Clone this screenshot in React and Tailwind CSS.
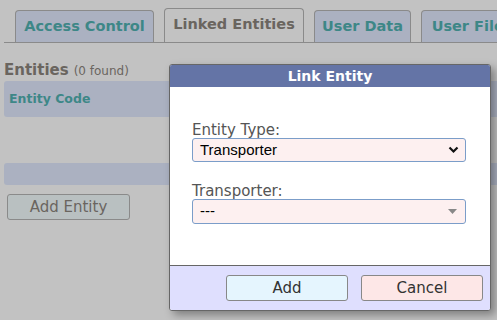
import React from "react";

function Tab({ label, active, w }) {
  return (
    <div
      className={
        "shrink-0 whitespace-nowrap flex items-center justify-center rounded-t-[4px] border border-[#8a8a8a] font-bold text-[14.5px] " +
        (active
          ? "h-[35px] bg-[#c2c2c2] text-[#6a655f] border-b-[#c2c2c2] -mb-px pb-[2px]"
          : "h-[32px] bg-[#abb1c1] text-[#3d8787] border-b-0")
      }
      style={{ width: w }}
    >
      {label}
    </div>
  );
}

export default function App() {
  return (
    <div
      className="relative w-[497px] h-[320px] overflow-hidden bg-[#c2c2c2]"
      style={{ fontFamily: '"DejaVu Sans", Verdana, sans-serif' }}
    >
      {/* Tabs */}
      <div className="pt-[8px] pl-[4px]">
        <div className="flex items-end gap-[10px] pl-[11px] border-b border-[#8a8a8a] h-[35px] overflow-hidden">
          <Tab label="Access Control" w={139} />
          <Tab label="Linked Entities" active w={140} />
          <Tab label="User Data" w={97} />
          <Tab label="User Files" w={102} />
        </div>
      </div>

      {/* Content */}
      <div className="pl-[4px] pt-[16px]">
        <div className="flex items-baseline gap-[5px] text-[#6a655f] h-[22px]">
          <span className="font-bold text-[15px]">Entities</span>
          <span className="text-[12px]">(0 found)</span>
        </div>
        <div className="h-[36px] bg-[#abb1c1] rounded-l-[3px] flex items-center pl-[5px] text-[#3d8787] font-bold text-[12.5px]">
          Entity Code
        </div>
        <div className="h-[46px]" />
        <div className="h-[22px] bg-[#abb1c1] rounded-l-[3px]" />
        <div className="pt-[9px] pl-[3px]">
          <div className="w-[123px] h-[26px] border border-[#8a8a8a] rounded-[3px] bg-[#b9c0c1] flex items-center justify-center text-[15px] text-[#6a655f]">
            Add Entity
          </div>
        </div>
      </div>

      {/* Dialog */}
      <div className="absolute left-[169px] top-[64px] w-[322px] h-[247px] border border-[#666] rounded-[3px] bg-white flex flex-col overflow-hidden shadow-[4px_4px_8px_rgba(0,0,0,0.35)]">
        <div className="h-[22px] bg-[#6474a6] text-white font-bold text-[14px] flex items-center justify-center">
          Link Entity
        </div>
        <div className="flex-1 pl-[22px] pt-[35px]">
          <div className="text-[15px] text-[#555] leading-[16px]">Entity Type:</div>
          <div
            className="w-[274px] h-[24px] border border-[#7b9dc9] rounded-[3px] bg-[#fdf0f0] flex items-center justify-between pl-[7px] pr-[6px] text-[15px] text-black"
            style={{ fontFamily: '"Liberation Sans", Arial, sans-serif' }}
          >
            <span>Transporter</span>
            <svg width="11" height="8" viewBox="0 0 11 8">
              <path d="M1.5 1.5 L5.5 5.5 L9.5 1.5" stroke="#111" strokeWidth="2.2" fill="none" />
            </svg>
          </div>
          <div className="mt-[21px] text-[15px] text-[#555] leading-[16px]">Transporter:</div>
          <div
            className="w-[274px] h-[25px] border border-[#7b9dc9] rounded-[3px] bg-[#fdf0f0] flex items-center justify-between pl-[7px] pr-[8px] text-[15px] text-black"
            style={{ fontFamily: '"Liberation Sans", Arial, sans-serif' }}
          >
            <span>---</span>
            <svg width="9" height="6" viewBox="0 0 9 6">
              <path d="M0 0 L9 0 L4.5 5 Z" fill="#888" />
            </svg>
          </div>
        </div>
        <div className="h-[45px] border-t border-[#666] bg-[#dfdffe] flex items-start justify-end gap-[13px] pr-[7px] pt-[9px]">
          <div className="w-[122px] h-[26px] border border-[#888] rounded-[3px] bg-[#e5f5fe] flex items-center justify-center text-[15px] text-[#333]">
            Add
          </div>
          <div className="w-[122px] h-[26px] border border-[#888] rounded-[3px] bg-[#fde7e7] flex items-center justify-center text-[15px] text-[#333]">
            Cancel
          </div>
        </div>
      </div>
    </div>
  );
}
